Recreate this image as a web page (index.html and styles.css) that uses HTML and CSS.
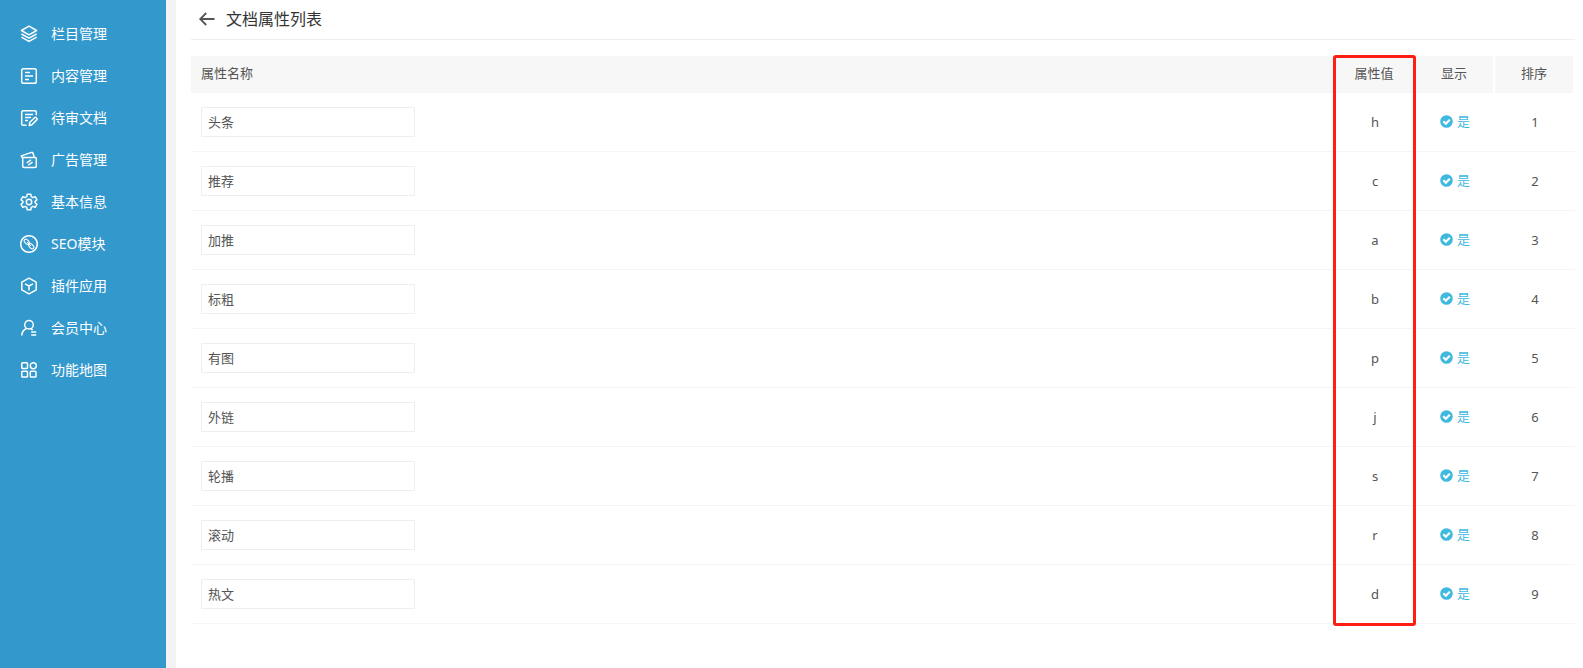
FILE: index.html
```html
<!DOCTYPE html>
<html lang="zh-CN">
<head>
    <meta charset="UTF-8">
    <meta name="viewport" content="width=device-width, initial-scale=1.0">
    <title>文档属性列表</title>
    <link rel="stylesheet" href="styles.css">
</head>
<body>
    <svg class="defs" aria-hidden="true">
        <symbol id="check" viewBox="0 0 13 13">
            <circle cx="6.5" cy="6.5" r="6.3" fill="currentColor"/>
            <path d="M3.3 6.2l2.500 2.500 4-4" fill="none" stroke="#fff" stroke-width="2.200"/>
        </symbol>
    </svg>

    <nav class="sidebar">
        <ul>
            <li><a href="#">
                <svg class="icon" viewBox="0 0 18 18"><path d="M9 1.2l7.6 4.3L9 9.800 1.400 5.500zM1.400 9L9 13.200 16.600 9M1.400 12.200L9 16.400l7.600-4.200"/></svg>
                <span>栏目管理</span></a></li>
            <li><a href="#">
                <svg class="icon" viewBox="0 0 18 18"><rect x="1.700" y="1.700" width="14.600" height="14.600" rx="1.800"/><path d="M5 5.500h5M5 9h8M5 12.500h4"/></svg>
                <span>内容管理</span></a></li>
            <li><a href="#">
                <svg class="icon" viewBox="0 0 18 18"><path d="M6.500 16.300H3.200a1.500 1.500 0 0 1-1.500-1.500V3.200a1.500 1.500 0 0 1 1.500-1.500h11.600a1.500 1.500 0 0 1 1.500 1.500v3M5 5.500h8M5 8.500h6M5 11.500h3M9.300 16.500l.4-3 4.800-4.800a1.200 1.200 0 0 1 1.800 0l.4.400a1.200 1.200 0 0 1 0 1.800l-4.800 4.800z"/></svg>
                <span>待审文档</span></a></li>
            <li><a href="#">
                <svg class="icon" viewBox="0 0 18 18"><path d="M2.700 6.500h12.600a1 1 0 0 1 1 1v7.700a1.300 1.300 0 0 1-1.300 1.300H4a1.300 1.300 0 0 1-1.300-1.300zM2.700 7.500L1.300 4.900l10.300-3.500a1 1 0 0 1 1.300.6l1.500 4.500M6.700 12l4.300-3.200M8.300 14.200l4.300-3.200"/></svg>
                <span>广告管理</span></a></li>
            <li><a href="#">
                <svg class="icon" viewBox="0 0 18 18"><path d="M7.200 1.200h3.600l.5 2.500 1.500.9 2.400-.9 1.800 3.100-1.900 1.600v1.200l1.900 1.600-1.800 3.100-2.400-.9-1.500.9-.5 2.500H7.200l-.5-2.500-1.500-.9-2.400.9L1 11.200l1.900-1.600V8.400L1 6.800l1.800-3.100 2.400.9 1.500-.9z"/><circle cx="9" cy="9" r="2.700"/></svg>
                <span>基本信息</span></a></li>
            <li><a href="#">
                <svg class="icon" viewBox="0 0 18 18"><circle cx="9" cy="9" r="8.300"/><g transform="rotate(45 9 9)" stroke-width="1.100"><rect x="2.800" y="7.200" width="6" height="3.600" rx="1.800"/><rect x="9.200" y="7.200" width="6" height="3.600" rx="1.800"/><path d="M6.500 9h5"/></g></svg>
                <span>SEO模块</span></a></li>
            <li><a href="#">
                <svg class="icon" viewBox="0 0 18 18"><path d="M9 1.200l7.200 4v7.700L9 16.900l-7.200-4V5.200zM5 6.800l4 2.200 4-2.200M9 9v4.500"/></svg>
                <span>插件应用</span></a></li>
            <li><a href="#">
                <svg class="icon" viewBox="0 0 18 18"><circle cx="9" cy="5.800" r="4.300"/><path d="M6.500 9.500C3.500 10.700 1.900 13 1.800 16.600M11 9.600l1.600 1.500M11.200 13h5M11.200 16h5"/></svg>
                <span>会员中心</span></a></li>
            <li><a href="#">
                <svg class="icon" viewBox="0 0 18 18"><rect x="1.800" y="1.800" width="5.700" height="5.700" rx=".8"/><circle cx="13.300" cy="4.700" r="3"/><rect x="1.800" y="10.300" width="5.700" height="5.700" rx=".8"/><rect x="10.300" y="10.300" width="5.700" height="5.700" rx=".8"/></svg>
                <span>功能地图</span></a></li>
        </ul>
    </nav>

    <main class="content">
        <header class="page-head">
            <a href="#" class="back" aria-label="返回"><svg viewBox="0 0 16 14"><path d="M15.500 7H1.500M7.200 1L1.200 7l6 6"/></svg></a>
            <h1>文档属性列表</h1>
        </header>

        <div class="table-wrap">
            <table>
                <thead>
                    <tr>
                        <th class="name">属性名称</th>
                        <th>属性值</th>
                        <th>显示</th>
                        <th>排序</th>
                    </tr>
                </thead>
                <tbody>
                    <tr>
                        <td class="name"><input type="text" value="头条" aria-label="属性名称"></td>
                        <td>h</td>
                        <td><button type="button" class="status"><svg><use href="#check"/></svg>是</button></td>
                        <td>1</td>
                    </tr>
                    <tr>
                        <td class="name"><input type="text" value="推荐" aria-label="属性名称"></td>
                        <td>c</td>
                        <td><button type="button" class="status"><svg><use href="#check"/></svg>是</button></td>
                        <td>2</td>
                    </tr>
                    <tr>
                        <td class="name"><input type="text" value="加推" aria-label="属性名称"></td>
                        <td>a</td>
                        <td><button type="button" class="status"><svg><use href="#check"/></svg>是</button></td>
                        <td>3</td>
                    </tr>
                    <tr>
                        <td class="name"><input type="text" value="标粗" aria-label="属性名称"></td>
                        <td>b</td>
                        <td><button type="button" class="status"><svg><use href="#check"/></svg>是</button></td>
                        <td>4</td>
                    </tr>
                    <tr>
                        <td class="name"><input type="text" value="有图" aria-label="属性名称"></td>
                        <td>p</td>
                        <td><button type="button" class="status"><svg><use href="#check"/></svg>是</button></td>
                        <td>5</td>
                    </tr>
                    <tr>
                        <td class="name"><input type="text" value="外链" aria-label="属性名称"></td>
                        <td>j</td>
                        <td><button type="button" class="status"><svg><use href="#check"/></svg>是</button></td>
                        <td>6</td>
                    </tr>
                    <tr>
                        <td class="name"><input type="text" value="轮播" aria-label="属性名称"></td>
                        <td>s</td>
                        <td><button type="button" class="status"><svg><use href="#check"/></svg>是</button></td>
                        <td>7</td>
                    </tr>
                    <tr>
                        <td class="name"><input type="text" value="滚动" aria-label="属性名称"></td>
                        <td>r</td>
                        <td><button type="button" class="status"><svg><use href="#check"/></svg>是</button></td>
                        <td>8</td>
                    </tr>
                    <tr>
                        <td class="name"><input type="text" value="热文" aria-label="属性名称"></td>
                        <td>d</td>
                        <td><button type="button" class="status"><svg><use href="#check"/></svg>是</button></td>
                        <td>9</td>
                    </tr>
                </tbody>
            </table>
            <div class="marker"></div>
        </div>
    </main>
</body>
</html>
```
FILE: styles.css
```css
* {
    margin: 0;
    padding: 0;
    box-sizing: border-box;
}

body {
    display: flex;
    min-height: 100vh;
    background: #f3f3f3;
    color: #555;
    font-family: "Noto Sans", "Noto Sans CJK SC", sans-serif;
    font-size: 13px;
    line-height: 20px;
}

.defs {
    position: absolute;
    width: 0;
    height: 0;
}

/* left menu */
.sidebar {
    flex: 0 0 166px;
    padding-top: 13px;
    background: #3398cc;
}

.sidebar ul {
    list-style: none;
}

.sidebar a {
    display: flex;
    align-items: center;
    gap: 13px;
    height: 42px;
    padding-left: 20px;
    color: #fff;
    font-size: 14px;
    text-decoration: none;
}

.icon {
    width: 18px;
    height: 18px;
    fill: none;
    stroke: #fff;
    stroke-width: 1.5;
    stroke-linejoin: round;
}

/* main area */
.content {
    flex: 1;
    min-width: 0;
    margin-left: 10px;
    padding: 0 8px 0 15px;
    background: #fff;
}

.page-head {
    display: flex;
    align-items: center;
    gap: 11px;
    height: 40px;
    padding: 0 8px 2px;
    border-bottom: 1px solid #eee;
}

.page-head h1 {
    color: #333;
    font-size: 16px;
    font-weight: normal;
}

.back svg {
    display: block;
    width: 16px;
    height: 14px;
    fill: none;
    stroke: #555;
    stroke-width: 1.8;
}

.table-wrap {
    position: relative;
    margin-top: 16px;
}

table {
    width: 100%;
    table-layout: fixed;
    border-spacing: 0;
}

th {
    width: 80px;
    height: 37px;
    padding-bottom: 3px;
    background: #f7f7f7;
    border-right: 2px solid #fff;
    font-weight: normal;
    text-align: center;
}

td {
    height: 59px;
    border-bottom: 1px solid #f5f5f5;
    text-align: center;
}

.name {
    width: auto;
    padding-left: 10px;
    text-align: left;
}

td input {
    display: block;
    width: 214px;
    height: 30px;
    padding: 0 6px 2px;
    border: 1px solid #eee;
    background: #fff;
    color: #555;
    font: inherit;
}

.status {
    display: inline-flex;
    align-items: center;
    gap: 4px;
    border: none;
    background: none;
    color: #3fb9de;
    font: inherit;
    cursor: pointer;
}

.status svg {
    width: 13px;
    height: 13px;
}

/* red frame round the value column */
.marker {
    position: absolute;
    top: -1px;
    right: 159px;
    bottom: -2px;
    width: 83px;
    border: 3px solid #ff1e12;
    border-radius: 3px;
    pointer-events: none;
}
```
